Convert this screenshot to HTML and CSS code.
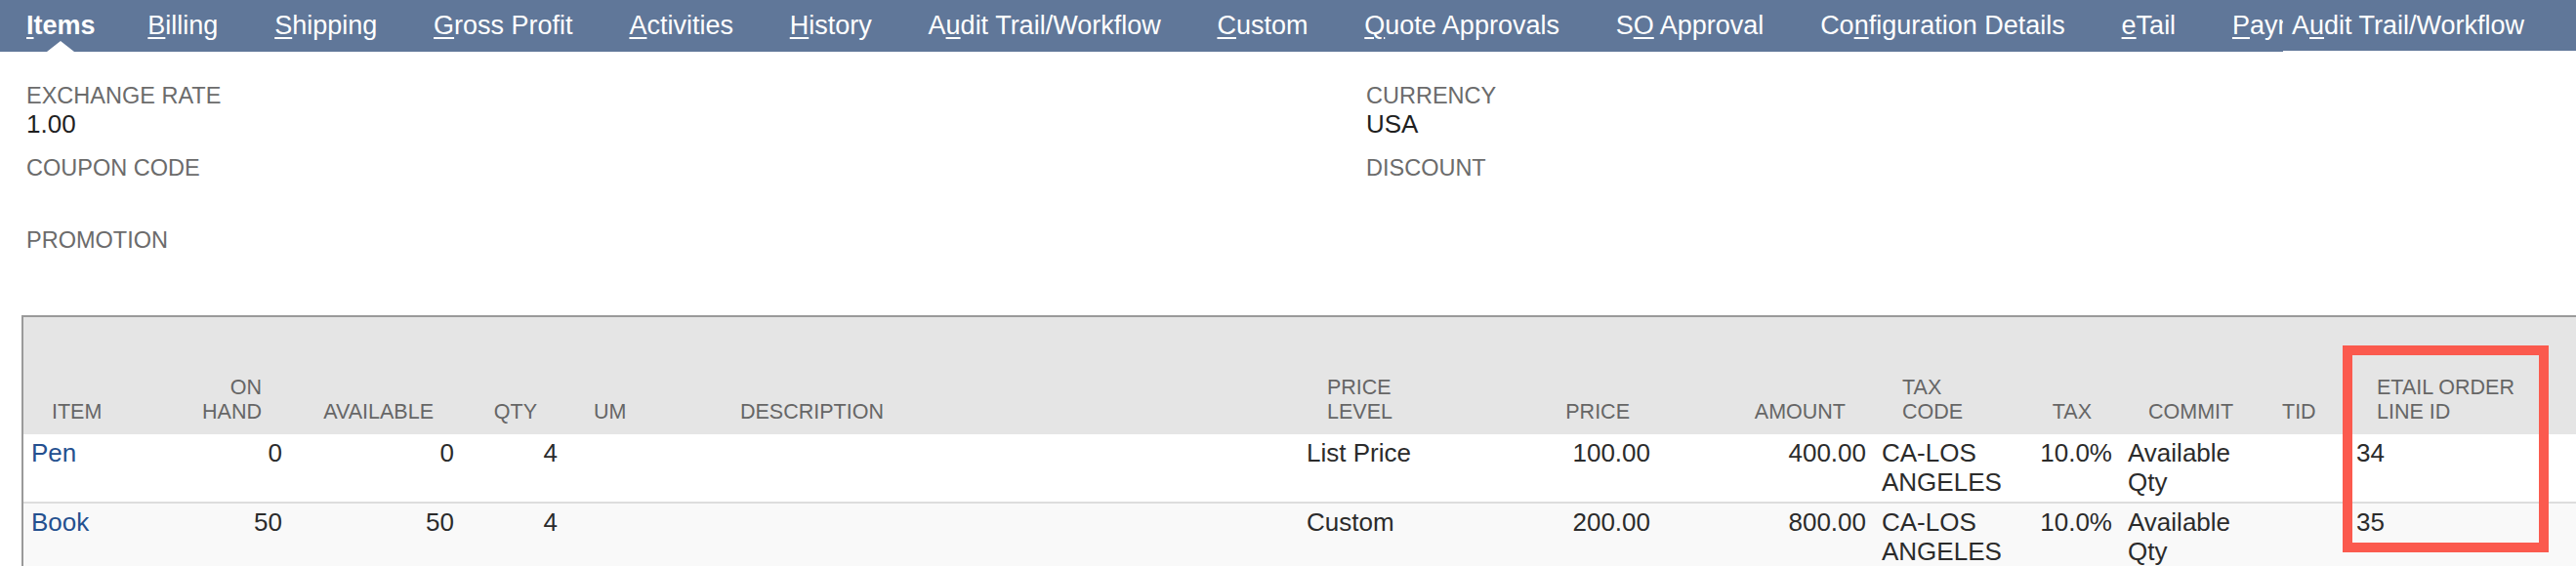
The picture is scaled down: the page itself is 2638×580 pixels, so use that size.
FILE: index.html
```html
<!DOCTYPE html>
<html lang="en">
<head>
<meta charset="utf-8">
<title>Sales Order - Items</title>
<link rel="stylesheet" href="styles.css">
</head>
<body>
<nav class="tabs">
  <div class="tab-list">
    <a class="tab active"><u>I</u>tems</a>
    <a class="tab"><u>B</u>illing</a>
    <a class="tab"><u>S</u>hipping</a>
    <a class="tab"><u>G</u>ross Profit</a>
    <a class="tab"><u>A</u>ctivities</a>
    <a class="tab"><u>H</u>istory</a>
    <a class="tab">A<u>u</u>dit Trail/Workflow</a>
    <a class="tab"><u>C</u>ustom</a>
    <a class="tab"><u>Q</u>uote Approvals</a>
    <a class="tab">S<u>O</u> Approval</a>
    <a class="tab">Co<u>n</u>figuration Details</a>
    <a class="tab"><u>e</u>Tail</a>
    <a class="tab"><u>P</u>ayment</a>
  </div>
  <div class="tab-tip">A<u>u</u>dit Trail/Workflow</div>
</nav>

<section class="fields">
  <div class="field-col">
    <div class="field"><div class="label">EXCHANGE RATE</div><div class="value">1.00</div></div>
    <div class="field"><div class="label">COUPON CODE</div><div class="value"></div></div>
    <div class="field"><div class="label">PROMOTION</div><div class="value"></div></div>
  </div>
  <div class="field-col">
    <div class="field"><div class="label">CURRENCY</div><div class="value">USA</div></div>
    <div class="field"><div class="label">DISCOUNT</div><div class="value"></div></div>
  </div>
</section>

<div class="grid-wrap">
  <table class="items">
    <colgroup>
      <col class="c-item"><col class="c-onhand"><col class="c-avail"><col class="c-qty"><col class="c-um"><col class="c-desc"><col class="c-plevel"><col class="c-price"><col class="c-amount"><col class="c-taxcode"><col class="c-tax"><col class="c-commit"><col class="c-tid"><col class="c-etail"><col class="c-extra">
    </colgroup>
    <thead>
      <tr>
        <th>ITEM</th>
        <th class="num">ON<br>HAND</th>
        <th class="num">AVAILABLE</th>
        <th class="num">QTY</th>
        <th>UM</th>
        <th>DESCRIPTION</th>
        <th>PRICE<br>LEVEL</th>
        <th class="num">PRICE</th>
        <th class="num">AMOUNT</th>
        <th>TAX<br>CODE</th>
        <th class="num">TAX</th>
        <th>COMMIT</th>
        <th>TID</th>
        <th>ETAIL ORDER<br>LINE ID</th>
        <th></th>
      </tr>
    </thead>
    <tbody>
      <tr>
        <td><a class="link">Pen</a></td>
        <td class="num">0</td>
        <td class="num">0</td>
        <td class="num">4</td>
        <td></td>
        <td></td>
        <td>List Price</td>
        <td class="num">100.00</td>
        <td class="num">400.00</td>
        <td>CA-LOS<br>ANGELES</td>
        <td class="num">10.0%</td>
        <td>Available<br>Qty</td>
        <td></td>
        <td>34</td>
        <td></td>
      </tr>
      <tr class="alt">
        <td><a class="link">Book</a></td>
        <td class="num">50</td>
        <td class="num">50</td>
        <td class="num">4</td>
        <td></td>
        <td></td>
        <td>Custom</td>
        <td class="num">200.00</td>
        <td class="num">800.00</td>
        <td>CA-LOS<br>ANGELES</td>
        <td class="num">10.0%</td>
        <td>Available<br>Qty</td>
        <td></td>
        <td>35</td>
        <td></td>
      </tr>
    </tbody>
  </table>
  <div class="highlight"></div>
</div>
</body>
</html>
```

FILE: styles.css
```css
* { box-sizing: border-box; }

html, body {
  margin: 0;
  padding: 0;
  background: #ffffff;
  overflow: hidden;
}

body {
  width: 2638px;
  height: 580px;
  font-family: "Liberation Sans", Arial, Helvetica, sans-serif;
  color: #222;
}

/* ---------- tab bar ---------- */
.tabs {
  position: relative;
  height: 53px;
  background: #607799;
  overflow: hidden;
}

.tab-list {
  display: flex;
  gap: 57.8px;
  padding-left: 27px;
  white-space: nowrap;
  height: 53px;
  width: 2338px;
  overflow: hidden;
}

.tab {
  position: relative;
  color: #ffffff;
  font-size: 27px;
  line-height: 53px;
  text-decoration: none;
  flex: none;
}

.tab u { text-decoration-thickness: 2px; text-underline-offset: 3px; }

.tab.active {
  font-weight: bold;
  margin-right: -4px;
}

.tab.active::after {
  content: "";
  position: absolute;
  left: 50%;
  bottom: 0;
  margin-left: -14px;
  border-left: 14px solid transparent;
  border-right: 14px solid transparent;
  border-bottom: 11px solid #ffffff;
}

.tab-tip {
  position: absolute;
  top: 0;
  left: 2338px;
  right: 0;
  height: 53px;
  padding-left: 9px;
  background: #607799;
  border-bottom: 1px solid #ffffff;
  color: #ffffff;
  font-size: 27px;
  line-height: 52px;
  white-space: nowrap;
}

.tab-tip u { text-decoration-thickness: 2px; text-underline-offset: 3px; }

/* ---------- header fields ---------- */
.fields {
  display: grid;
  grid-template-columns: 1372px 1fr;
  padding: 31px 0 0 27px;
}

.field { margin-bottom: 16px; }

.label {
  font-size: 23.5px;
  line-height: 28px;
  color: #6b6b6b;
}

.value {
  font-size: 26px;
  line-height: 30px;
  height: 30px;
  color: #1f1f1f;
}

/* ---------- item grid ---------- */
.grid-wrap {
  position: relative;
  margin: 17px 0 0 22px;
}

.items {
  border-collapse: separate;
  border-spacing: 0;
  table-layout: fixed;
  width: 2878px;
  border-top: 2px solid #9a9a9a;
  border-left: 2px solid #9a9a9a;
}

.c-item { width: 151px; }
.c-onhand { width: 122px; }
.c-avail { width: 176px; }
.c-qty { width: 106px; }
.c-um { width: 150px; }
.c-desc { width: 601px; }
.c-plevel { width: 170px; }
.c-price { width: 198px; }
.c-amount { width: 221px; }
.c-taxcode { width: 147px; }
.c-tax { width: 105px; }
.c-commit { width: 137px; }
.c-tid { width: 97px; }
.c-etail { width: 215px; }
.c-extra { width: 280px; }

.items thead tr { height: 120px; }

.items th {
  vertical-align: bottom;
  padding: 0 29px 10px;
  background: #e5e5e5;
  color: #666666;
  font-size: 21.5px;
  line-height: 25px;
  font-weight: normal;
  text-align: left;
  white-space: nowrap;
}

.items td {
  vertical-align: top;
  padding: 4px 8px 5px;
  background: #ffffff;
  border-bottom: 2px solid #dddddd;
  color: #2b2b2b;
  font-size: 26px;
  line-height: 30px;
  white-space: nowrap;
}

.items tr.alt td { background: #f9f9f9; }

.items .num { text-align: right; }

.link {
  color: #24508f;
  text-decoration: none;
}

.highlight {
  position: absolute;
  left: 2377px;
  top: 31px;
  width: 211px;
  height: 212px;
  border: 10px solid #fb5a4e;
}
```
